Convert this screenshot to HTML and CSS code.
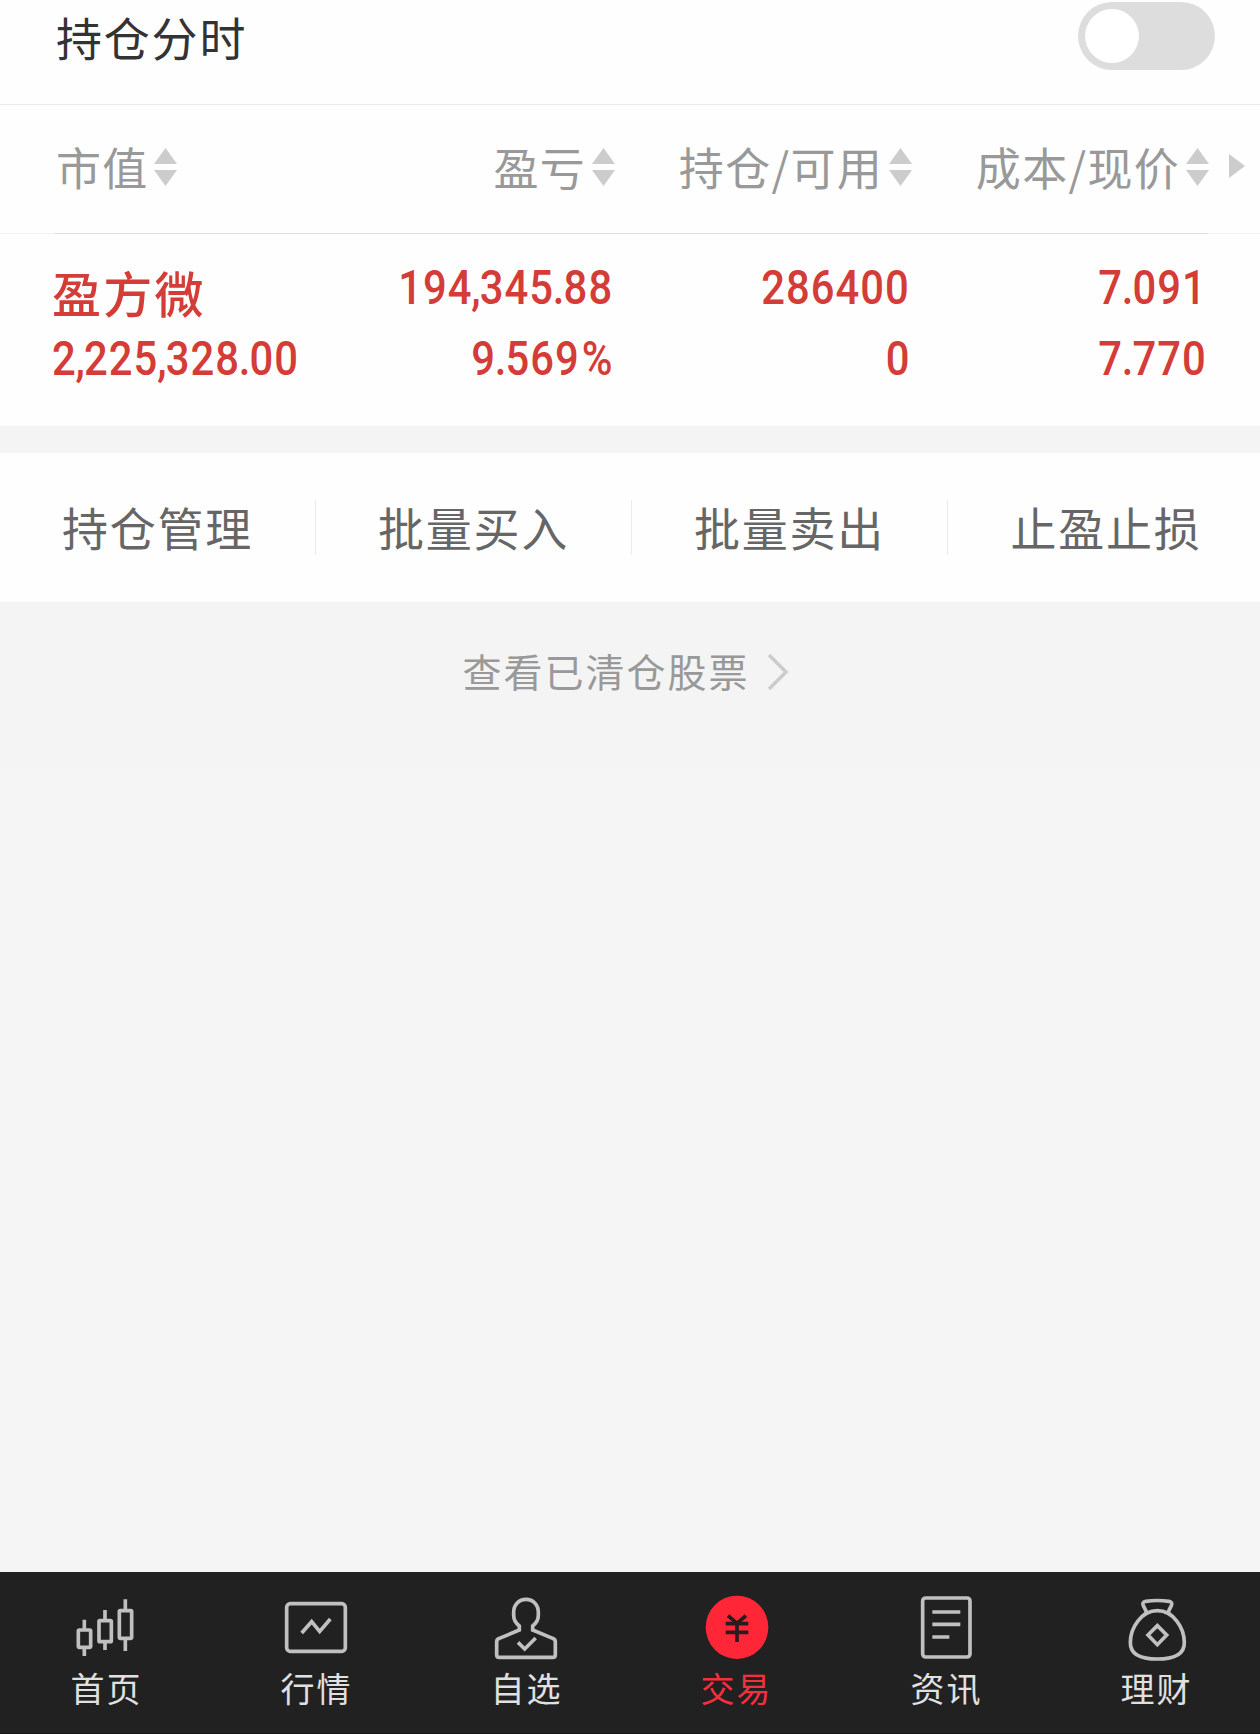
FILE: index.html
```html
<!DOCTYPE html>
<html lang="zh-CN">
<head>
  <meta charset="UTF-8">
  <meta name="viewport" content="width=device-width, initial-scale=1.0">
  <title>持仓</title>
  <link rel="stylesheet" href="styles.css">
</head>
<body>
  <div class="page">
    <header class="title-bar">
      <h1>持仓分时</h1>
      <div class="switch"><span class="knob"></span></div>
    </header>

    <div class="table-head">
      <div class="th">市值<svg class="sort" viewBox="0 0 23 38"><path d="M11.5 0L23 16H0zM0 22h23L11.5 38z"/></svg></div>
      <div class="th">盈亏<svg class="sort" viewBox="0 0 23 38"><path d="M11.5 0L23 16H0zM0 22h23L11.5 38z"/></svg></div>
      <div class="th">持仓/可用<svg class="sort" viewBox="0 0 23 38"><path d="M11.5 0L23 16H0zM0 22h23L11.5 38z"/></svg></div>
      <div class="th">成本/现价<svg class="sort" viewBox="0 0 23 38"><path d="M11.5 0L23 16H0zM0 22h23L11.5 38z"/></svg></div>
      <svg class="more" viewBox="0 0 16 24"><path d="M0 0L16 12L0 24z"/></svg>
    </div>
    <div class="head-line"></div>

    <div class="stock">
      <div class="cell">
        <span class="name">盈方微</span>
        <span class="num">2<i>,</i>225<i>,</i>328<i>.</i>00</span>
      </div>
      <div class="cell">
        <span class="num">194<i>,</i>345<i>.</i>88</span>
        <span class="num">9<i>.</i>569<b>%</b></span>
      </div>
      <div class="cell">
        <span class="num">286400</span>
        <span class="num">0</span>
      </div>
      <div class="cell">
        <span class="num">7<i>.</i>091</span>
        <span class="num">7<i>.</i>770</span>
      </div>
    </div>

    <div class="actions">
      <a class="action">持仓管理</a>
      <a class="action">批量买入</a>
      <a class="action">批量卖出</a>
      <a class="action">止盈止损</a>
    </div>

    <div class="cleared">
      <span>查看已清仓股票</span>
      <svg class="chevron" viewBox="0 0 22 38"><path d="M2 2L19 19L2 36"/></svg>
    </div>

    <nav class="tabs">
      <a class="tab">
        <svg class="icon" viewBox="210 102 210 204">
          <rect x="235" y="210" width="37" height="52" rx="3"/>
          <rect x="297" y="182" width="37" height="63" rx="3"/>
          <rect x="358" y="152" width="37" height="83" rx="3"/>
          <path d="M253 179v31M253 262v26M315 150v32M315 245v25M376 118v34M376 235v38"/>
        </svg>
        <span>首页</span>
      </a>
      <a class="tab">
        <svg class="icon" viewBox="840 102 210 204">
          <rect x="860" y="131" width="176" height="143" rx="11"/>
          <path d="M905 219L935 185L959 214L991 177"/>
        </svg>
        <span>行情</span>
      </a>
      <a class="tab">
        <svg class="icon" viewBox="210 102 210 204">
          <path d="M298 198V210L238 235Q230 238 230 246V284Q230 292 238 292H398Q406 292 406 284V246Q406 238 398 235L338 210V198C350 189 355 178 355 166V157C355 134 339 118 318 118S281 134 281 157V166C281 178 286 189 298 198z"/>
          <path d="M294 247L314 267L347 234"/>
        </svg>
        <span>自选</span>
      </a>
      <a class="tab active">
        <svg class="icon" viewBox="840 102 210 204">
          <ellipse class="disc" cx="951" cy="202" rx="94" ry="95"/>
          <path class="yen" d="M924 167L951 190L978 167M917 191H985M917 217H985M951 190V246"/>
        </svg>
        <span>交易</span>
      </a>
      <a class="tab">
        <svg class="icon" viewBox="212 102 210 204">
          <rect x="250" y="114" width="142" height="177" rx="9"/>
          <path d="M279 156H363M279 193H363M279 231H330"/>
        </svg>
        <span>资讯</span>
      </a>
      <a class="tab">
        <svg class="icon" viewBox="842 102 210 204">
          <path d="M922 157L912 137Q907 127 919 124Q954 119 989 124Q1001 127 996 137L986 157"/>
          <path d="M954 152C906 152 873 203 873 248C873 284 905 297 954 297S1035 284 1035 248C1035 203 1002 152 954 152z"/>
          <path d="M954 197L982 225L954 254L926 225z"/>
        </svg>
        <span>理财</span>
      </a>
    </nav>
  </div>
</body>
</html>
```
FILE: styles.css
```css
* {
  box-sizing: border-box;
}
body {
  margin: 0;
  background-color: #f5f5f5;
  font-family: "Noto Sans CJK SC", sans-serif;
}
.page {
  display: flex;
  flex-direction: column;
  height: 1734px;
}
.title-bar {
  display: flex;
  justify-content: space-between;
  align-items: flex-start;
  height: 105px;
  padding: 2px 45px 0 56px;
  background-color: #fefefe;
  border-bottom: 1px solid #ebebeb;
}
.title-bar h1 {
  margin: 0;
  font-size: 46px;
  font-weight: 400;
  line-height: 69px;
  letter-spacing: 1.8px;
  color: #333;
}
.switch {
  width: 137px;
  height: 68px;
  padding: 7px;
  border-radius: 34px;
  background-color: #ddd;
}
.knob {
  display: block;
  width: 54px;
  height: 54px;
  border-radius: 50%;
  background-color: #fff;
}
.table-head,
.stock {
  display: grid;
  grid-template-columns: 300px 259px 297px 297px 1fr;
  padding-left: 56px;
  background-color: #fefefe;
}
.table-head {
  align-items: center;
  height: 128px;
  padding-bottom: 4px;
}
.th {
  display: flex;
  justify-content: flex-end;
  align-items: center;
  gap: 6px;
  font-size: 45px;
  line-height: 66px;
  letter-spacing: 1.3px;
  color: #999;
  white-space: nowrap;
}
.th:first-child {
  justify-content: flex-start;
  gap: 5px;
}
.sort {
  width: 23px;
  height: 38px;
  flex: none;
  fill: #ccc;
}
.more {
  width: 16px;
  height: 24px;
  margin: 0 0 2px 20px;
  fill: #ccc;
}
.head-line {
  height: 1px;
  padding: 0 52px 0 55px;
  background-color: #f2f2f2;
}
.head-line::before {
  content: "";
  display: block;
  height: 1px;
  background-color: #dcdcdc;
}
.stock {
  height: 192px;
  padding-top: 18px;
  color: #d43c37;
}
.cell {
  display: flex;
  flex-direction: column;
  align-items: flex-end;
  padding-right: 2px;
}
.cell:first-child {
  align-items: flex-start;
  margin-left: -4px;
}
.name {
  height: 71px;
  font-size: 49px;
  font-weight: 500;
  line-height: 80px;
  letter-spacing: 2.3px;
}
.num {
  height: 71px;
  font-family: Roboto, sans-serif;
  font-size: 48px;
  font-weight: 500;
  line-height: 71px;
  letter-spacing: 1.2px;
  white-space: nowrap;
  transform: scaleX(0.87);
  transform-origin: right;
}
/* tighter separators inside the figures */
.num i {
  margin-left: -1.4px;
  font-style: normal;
  letter-spacing: -1px;
}
.num b {
  font-weight: 500;
  margin-left: 2px;
}
.cell:first-child .num {
  transform-origin: left;
}
.actions {
  display: flex;
  align-items: center;
  height: 176px;
  border-top: 27px solid #f4f4f4;
  background-color: #fefefe;
}
.action {
  width: 315px;
  height: 55px;
  font-size: 46px;
  line-height: 53px;
  letter-spacing: 1.8px;
  text-align: center;
  color: #666;
}
.action + .action {
  width: 316px;
  border-left: 1px solid #ececec;
}
.action + .action:last-child {
  width: 313px;
  padding-left: 4px;
}
.cleared {
  display: flex;
  justify-content: center;
  align-items: flex-start;
  gap: 17px;
  height: 166px;
  padding: 40px 9px 0 0;
  background-color: #f4f4f4;
  font-size: 39px;
  line-height: 57px;
  letter-spacing: 2px;
  color: #999;
}
.chevron {
  width: 22px;
  height: 38px;
  margin-top: 11px;
  fill: none;
  stroke: #ccc;
  stroke-width: 3.5;
}
.tabs {
  display: flex;
  height: 162px;
  margin-top: auto;
  padding-top: 22px;
  background-color: #212121;
  border-bottom: 1px solid #1a1316;
}
.tab {
  display: flex;
  flex: 1;
  flex-direction: column;
  align-items: center;
  font-size: 34px;
  line-height: 50px;
  letter-spacing: 2px;
  color: #e0e0e0;
}
.tab span {
  margin: 1px 0 0 3px;
}
.icon {
  width: 70px;
  height: 68px;
  fill: none;
  stroke: #c0c0c0;
  stroke-width: 11;
}
.active {
  color: #f5303e;
}
.icon .disc {
  fill: #ff2737;
  stroke: none;
}
.icon .yen {
  stroke: #2a1c1e;
}
```
